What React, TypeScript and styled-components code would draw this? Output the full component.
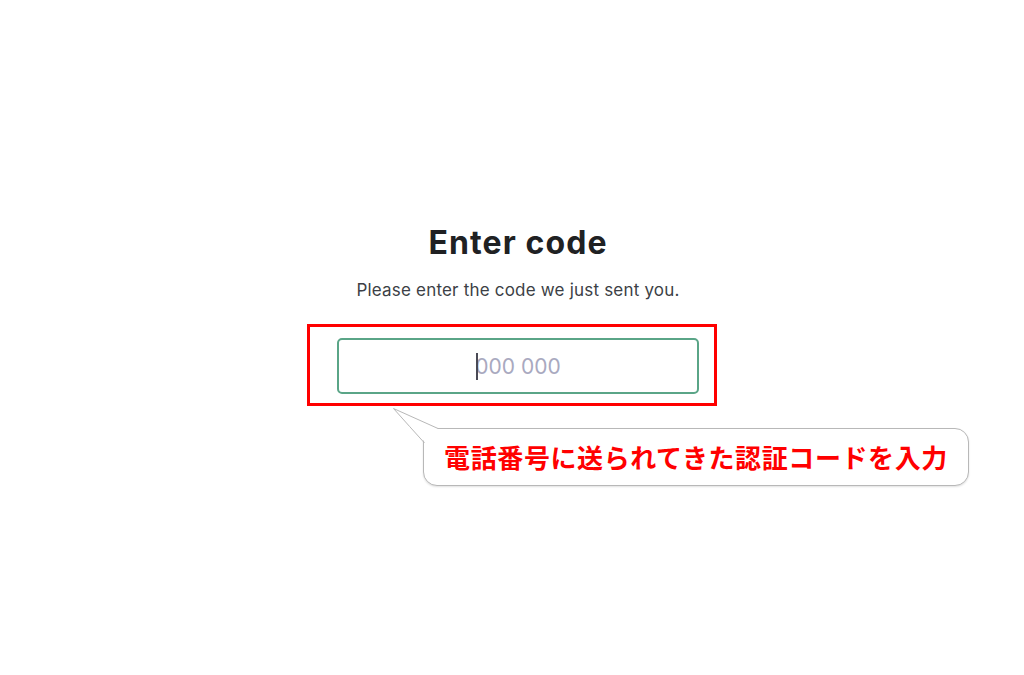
import styled, { createGlobalStyle } from 'styled-components';

const GlobalStyle = createGlobalStyle`
  html, body {
    margin: 0;
    padding: 0;
    background: #ffffff;
  }
  body {
    font-family: Inter, "Noto Sans", sans-serif;
    -webkit-font-smoothing: antialiased;
  }
`;

const Page = styled.main`
  width: 1024px;
  height: 675px;
  display: flex;
  flex-direction: column;
  align-items: center;
  padding-top: 224px;
  box-sizing: border-box;
  overflow: hidden;
`;

const Header = styled.header`
  display: flex;
  flex-direction: column;
  align-items: center;
  padding-left: 12px;
`;

const Title = styled.h1`
  margin: 0;
  font-size: 32px;
  line-height: 38px;
  font-weight: 700;
  color: #202123;
  letter-spacing: 1.1px;
`;

const Subtitle = styled.p`
  margin: 16px 0 0;
  font-size: 17px;
  line-height: 24px;
  color: #3c3f46;
  letter-spacing: 0.2px;
`;

const Highlight = styled.div`
  position: relative;
  margin-top: 22px;
  padding: 11px 15px 9px 27px;
  border: 3px solid #ff0000;
`;

const Field = styled.div`
  position: relative;
  width: 362px;
  height: 56px;
`;

const CodeInput = styled.input`
  width: 100%;
  height: 100%;
  box-sizing: border-box;
  border: 2px solid #5aa587;
  border-radius: 5px;
  background: #ffffff;
  font-family: Inter, "Noto Sans", sans-serif;
  font-size: 21px;
  text-align: center;
  color: #202123;
  outline: none;

  &::placeholder {
    color: #a9a9bf;
  }
`;

const Caret = styled.span`
  position: absolute;
  left: 139px;
  top: 15px;
  width: 2px;
  height: 27px;
  background: #4a4a55;
`;

const Callout = styled.div`
  position: absolute;
  left: 113px;
  top: 101px;
  width: 546px;
  height: 58px;
  box-sizing: border-box;
  border: 1px solid #b8b8b8;
  border-radius: 14px;
  background: #ffffff;
  box-shadow: 0 1px 2px rgba(0, 0, 0, 0.12);
  display: flex;
  align-items: center;
  justify-content: center;
`;

const Tail = styled.svg`
  position: absolute;
  left: -32px;
  top: -22px;
  overflow: visible;
`;

const CalloutText = styled.span`
  font-family: "Noto Sans CJK JP", "Noto Sans", sans-serif;
  font-weight: 700;
  font-size: 26px;
  line-height: 1;
  color: #ff0000;
  letter-spacing: 0.6px;
`;

export default function App() {
  return (
    <>
      <GlobalStyle />
      <Page>
        <Header>
          <Title>Enter code</Title>
          <Subtitle>Please enter the code we just sent you.</Subtitle>
        </Header>
        <Highlight>
          <Field>
            <CodeInput type="text" placeholder="000 000" readOnly />
            <Caret />
          </Field>
          <Callout>
            <Tail width="50" height="40" viewBox="0 0 50 40">
              <path d="M1.5 1.5 L46 21.5 L46 37 L33 37 L33 35 Q18 20 1.5 1.5 Z" fill="#ffffff" />
              <path
                d="M32.5 36 Q18 20 1.5 1.5 L46 21.5"
                fill="none"
                stroke="#b8b8b8"
                strokeWidth="1"
              />
            </Tail>
            <CalloutText>電話番号に送られてきた認証コードを入力</CalloutText>
          </Callout>
        </Highlight>
      </Page>
    </>
  );
}
